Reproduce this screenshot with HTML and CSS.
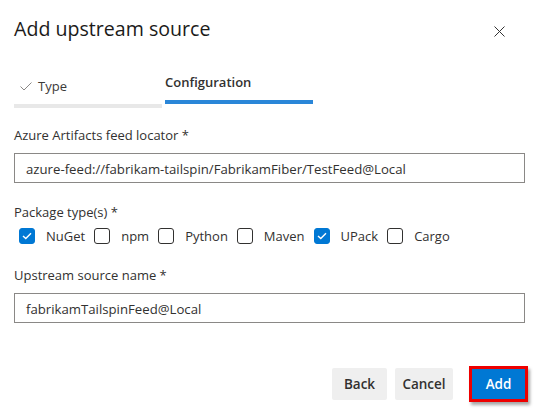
FILE: index.html
```html
<!DOCTYPE html>
<html lang="en">
<head>
<meta charset="utf-8">
<title>Add upstream source</title>
<link rel="stylesheet" href="styles.css">
</head>
<body>
<div class="dialog">
  <div class="header">
    <h1 class="title">Add upstream source</h1>
    <svg class="close" width="11" height="11" viewBox="0 0 11 11" aria-label="Close">
      <path d="M0.5 0.5 L10.5 10.5 M10.5 0.5 L0.5 10.5" stroke="#333" stroke-width="1" fill="none"/>
    </svg>
  </div>

  <div class="tabs">
    <div class="tab tab-done">
      <div class="tab-label">
        <svg class="tab-check" width="12" height="9" viewBox="0 0 12 9">
          <path d="M0.5 4.5 L4 8 L11.5 0.5" stroke="#8a8886" stroke-width="1" fill="none"/>
        </svg>
        <span>Type</span>
      </div>
      <div class="tab-bar"></div>
    </div>
    <div class="tab tab-active">
      <div class="tab-label"><span>Configuration</span></div>
      <div class="tab-bar"></div>
    </div>
  </div>

  <div class="field field-first">
    <div class="label">Azure Artifacts feed locator *</div>
    <div class="input">azure-feed://fabrikam-tailspin/FabrikamFiber/TestFeed@Local</div>
  </div>

  <div class="field">
    <div class="label">Package type(s) *</div>
    <div class="checks">
      <label class="check"><span class="box checked"><svg width="10" height="8" viewBox="0 0 10 8"><path d="M1 4 L3.8 6.6 L9 1.2" stroke="#fff" stroke-width="1.4" fill="none"/></svg></span><span class="check-text">NuGet</span></label>
      <label class="check"><span class="box"></span><span class="check-text">npm</span></label>
      <label class="check"><span class="box"></span><span class="check-text">Python</span></label>
      <label class="check"><span class="box"></span><span class="check-text">Maven</span></label>
      <label class="check"><span class="box checked"><svg width="10" height="8" viewBox="0 0 10 8"><path d="M1 4 L3.8 6.6 L9 1.2" stroke="#fff" stroke-width="1.4" fill="none"/></svg></span><span class="check-text">UPack</span></label>
      <label class="check"><span class="box"></span><span class="check-text">Cargo</span></label>
    </div>
  </div>

  <div class="field field-name">
    <div class="label">Upstream source name *</div>
    <div class="input">fabrikamTailspinFeed@Local</div>
  </div>

  <div class="footer">
    <button class="btn btn-back">Back</button>
    <button class="btn btn-cancel">Cancel</button>
    <span class="highlight"><button class="btn btn-primary">Add</button></span>
  </div>
</div>
</body>
</html>
```

FILE: styles.css
```css
* { box-sizing: border-box; }

html, body {
  margin: 0;
  padding: 0;
  background: #ffffff;
}

body {
  font-family: "Open Sans", "Noto Sans", sans-serif;
  color: #323130;
  width: 541px;
  height: 412px;
  overflow: hidden;
}

.dialog {
  padding: 15px 13px 0 14px;
}

.header {
  display: flex;
  justify-content: space-between;
  align-items: flex-start;
  padding-right: 23px;
}

.title {
  margin: 0;
  font-size: 19.6px;
  line-height: 28px;
  font-weight: 400;
  color: #1b1a19;
}

.close {
  margin-top: 11px;
  display: block;
}

.tabs {
  display: flex;
  gap: 3px;
  margin-top: 29px;
  align-items: flex-start;
}

.tab {
  width: 148px;
}

.tab-label {
  display: flex;
  align-items: center;
  height: 20px;
  font-size: 13px;
  line-height: 20px;
}

.tab-done {
  padding-top: 4px;
}

.tab-done .tab-label {
  padding-left: 6px;
  color: #3b3a39;
}

.tab-check {
  display: block;
  margin-right: 6px;
  margin-top: 1px;
}

.tab-active .tab-label {
  font-weight: 600;
  color: #323130;
}

.tab-bar {
  height: 4px;
  margin-top: 8px;
  background: #e8e8e8;
}

.tab-active .tab-bar {
  background: #2a86d8;
}

.field {
  margin-top: 19px;
}

.field-first {
  margin-top: 17px;
}

.label {
  font-size: 13px;
  line-height: 20px;
  color: #323130;
}

.input {
  margin-top: 8px;
  height: 30px;
  width: 511px;
  border: 1px solid #8a8886;
  padding: 1px 11px 0;
  font-size: 13.2px;
  line-height: 28px;
  color: #323130;
  white-space: nowrap;
}

.checks {
  display: flex;
  margin-top: 4px;
  padding-left: 5px;
  height: 20px;
  align-items: center;
}

.check {
  display: flex;
  align-items: center;
  margin-right: 9px;
  font-size: 13px;
  line-height: 20px;
}

.box {
  width: 16px;
  height: 16px;
  border: 1px solid #323130;
  border-radius: 3px;
  display: flex;
  align-items: center;
  justify-content: center;
  margin-right: 11px;
  background: #fff;
}

.box.checked {
  background: #0078d4;
  border-color: #0078d4;
}

.box svg { display: block; }

.field-name {
  margin-top: 19px;
}

.footer {
  display: flex;
  justify-content: flex-end;
  align-items: center;
  gap: 8px;
  margin-top: 43px;
  height: 36px;
}

.btn {
  font-family: "Open Sans", "Noto Sans", sans-serif;
  font-size: 13.5px;
  font-weight: 600;
  line-height: 20px;
  height: 32px;
  border: none;
  border-radius: 2px;
  padding: 0;
  background: #efefef;
  color: #323130;
  text-align: center;
}

.btn-back { width: 55px; }
.btn-cancel { width: 58px; }

.highlight {
  display: flex;
  margin-left: 8px;
  border: 3px solid #ee0000;
  box-shadow: 2px 3px 3px rgba(0, 0, 0, 0.35);
}

.btn-primary {
  width: 53px;
  height: 30px;
  border-radius: 0;
  background: #0078d4;
  color: #ffffff;
}
```
